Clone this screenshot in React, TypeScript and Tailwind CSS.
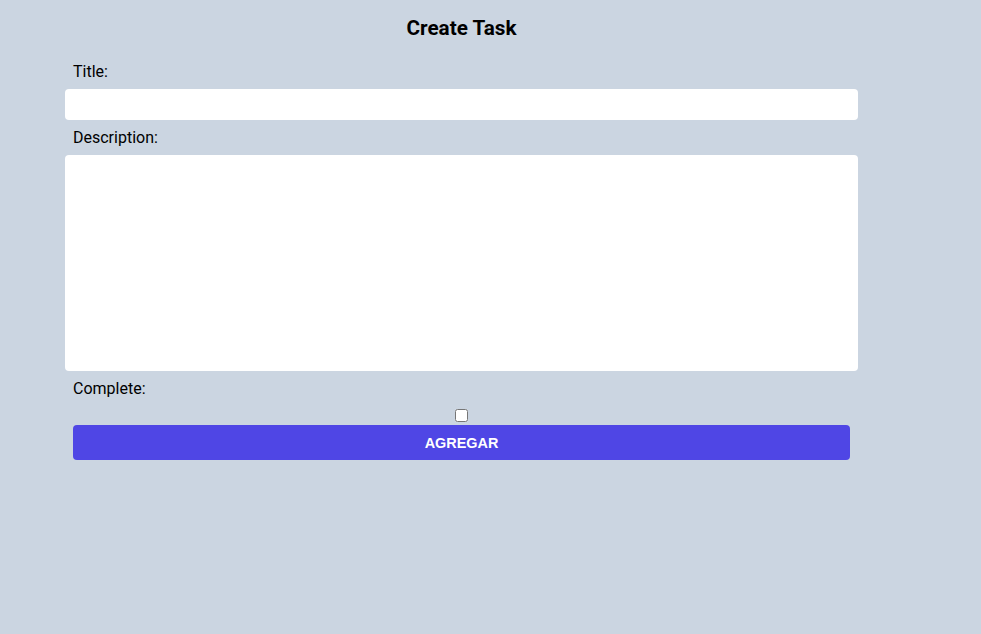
export default function App() {
  return (
    <div className="min-h-[634px] w-full bg-[#cbd5e1] pt-[14px]" style={{ fontFamily: "Roboto, sans-serif" }}>
      <h1 className="text-center text-[20.7px] leading-[28px] font-bold text-black w-[793px] ml-[65px]">Create Task</h1>
      <form className="ml-[65px] w-[793px] flex flex-col mt-[17px]">
        <label className="block px-2 pt-[1px] text-[16px] leading-[24px] text-black">Title:</label>
        <input type="text" className="mt-[5px] h-[31px] w-full rounded bg-white outline-none" />
        <label className="block px-2 pt-[1px] mt-[5px] text-[16px] leading-[24px] text-black">Description:</label>
        <textarea className="mt-[5px] h-[216px] w-full rounded bg-white outline-none resize-none" />
        <label className="block px-2 pt-[1px] mt-[5px] text-[16px] leading-[24px] text-black">Complete:</label>
        <div className="flex justify-center mt-[8px] h-[13px]">
          <input type="checkbox" className="w-[13px] h-[13px] m-0" />
        </div>
        <button
          type="button"
          className="mx-2 mt-[3px] h-[35px] pt-[2px] rounded bg-[#4f46e5] text-white font-black text-[14.4px] uppercase"
          style={{ fontFamily: "'Liberation Sans', Arial, sans-serif" }}
        >
          Agregar
        </button>
      </form>
    </div>
  );
}
